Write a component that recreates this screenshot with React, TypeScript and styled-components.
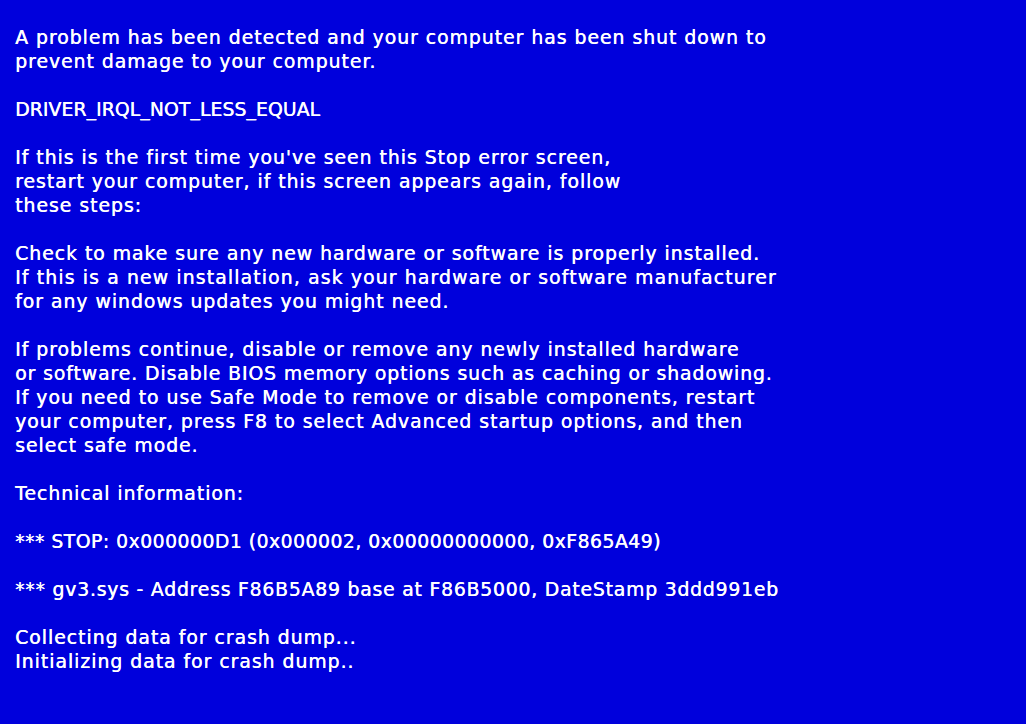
import React from 'react';
import styled, { createGlobalStyle } from 'styled-components';

const GlobalStyle = createGlobalStyle`
  html, body {
    margin: 0;
    padding: 0;
    background: #0000dc;
  }
`;

type TextLine = { text: string; spacing?: number };

const paragraphs: TextLine[][] = [
  [
    { text: 'A problem has been detected and your computer has been shut down to' },
    { text: 'prevent damage to your computer.' },
  ],
  [{ text: 'DRIVER_IRQL_NOT_LESS_EQUAL', spacing: 0.1 }],
  [
    { text: "If this is the first time you've seen this Stop error screen," },
    { text: 'restart your computer, if this screen appears again, follow' },
    { text: 'these steps:' },
  ],
  [
    { text: 'Check to make sure any new hardware or software is properly installed.' },
    { text: 'If this is a new installation, ask your hardware or software manufacturer', spacing: 1.15 },
    { text: 'for any windows updates you might need.' },
  ],
  [
    { text: 'If problems continue, disable or remove any newly installed hardware' },
    { text: 'or software. Disable BIOS memory options such as caching or shadowing.', spacing: 0.93 },
    { text: 'If you need to use Safe Mode to remove or disable components, restart' },
    { text: 'your computer, press F8 to select Advanced startup options, and then' },
    { text: 'select safe mode.' },
  ],
  [{ text: 'Technical information:' }],
  [{ text: '*** STOP: 0x000000D1 (0x000002, 0x00000000000, 0xF865A49)', spacing: 0.5 }],
  [{ text: '*** gv3.sys - Address F86B5A89 base at F86B5000, DateStamp 3ddd991eb', spacing: 0.8 }],
  [
    { text: 'Collecting data for crash dump...' },
    { text: 'Initializing data for crash dump..' },
  ],
];

export default function App() {
  return (
    <Screen>
      <GlobalStyle />
      {paragraphs.map((lines, i) => (
        <Block key={i}>
          {lines.map((line, j) => (
            <Line key={j} $spacing={line.spacing ?? 1}>
              {line.text}
            </Line>
          ))}
        </Block>
      ))}
    </Screen>
  );
}

const Screen = styled.main`
  box-sizing: border-box;
  min-height: 724px;
  padding: 26px 15px 0;
  background: #0000dc;
  color: #ffffff;
  font-family: 'DejaVu Sans', Verdana, sans-serif;
  font-size: 18.8px;
  line-height: 24px;
  text-shadow: 0.4px 0 0 #ffffff;
  display: flex;
  flex-direction: column;
  gap: 24px;
`;

const Block = styled.section`
  display: flex;
  flex-direction: column;
`;

const Line = styled.div<{ $spacing: number }>`
  white-space: pre;
  letter-spacing: ${(p) => p.$spacing}px;
`;
